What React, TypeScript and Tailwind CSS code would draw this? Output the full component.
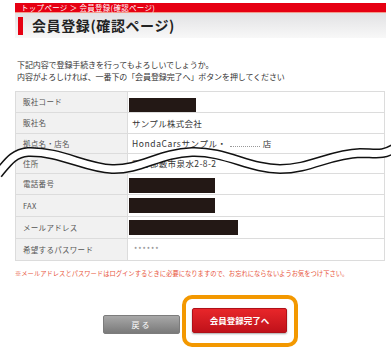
import React from "react";

const font = { fontFamily: '"Noto Sans CJK JP", "Noto Sans", sans-serif' };

function Row({
  label,
  h,
  children,
  last,
}: {
  label: string;
  h: string;
  children?: React.ReactNode;
  last?: boolean;
}) {
  return (
    <div className={`flex ${h} ${last ? "" : "border-b border-[#dcdcdc]"}`}>
      <div className="w-[112px] shrink-0 bg-[#f1f1f1] border-r border-[#dcdcdc] flex items-center pl-[7px] text-[7.5px] text-[#555] tracking-[0.3px]">
        {label}
      </div>
      <div className="flex-1 flex items-center pl-[1px] text-[8.5px] text-[#333]">{children}</div>
    </div>
  );
}

function Black({ w }: { w: string }) {
  return <div className={`${w} h-[14px] bg-[#231815]`} />;
}

export default function App() {
  return (
    <div className="relative w-[391px] h-[351px] bg-white overflow-hidden" style={font}>
      <div className="pl-[15px] pt-[3px]">
        <div className="w-[371px] h-[10px] bg-[#e60012] border-b border-[#f29a8a] text-white text-[7.5px] leading-[10px] pl-[6px] tracking-[0.3px]">
          トップページ ＞ 会員登録(確認ページ)
        </div>
        <div className="w-[371px] h-[25px] bg-gradient-to-b from-[#e2e2e4] to-[#f8f8f8] flex items-center">
          <div className="ml-[3px] w-[5px] h-[18px] bg-[#e60012]" />
          <div className="ml-[9px] text-[14px] font-bold text-[#222] tracking-[0.6px]">
            会員登録(確認ページ)
          </div>
        </div>

        <div className="mt-[21px] pl-[2px] text-[8px] leading-[12px] text-[#333] tracking-[-0.1px]">
          <div>下記内容で登録手続きを行ってもよろしいでしょうか。</div>
          <div>内容がよろしければ、一番下の「会員登録完了へ」ボタンを押してください</div>
        </div>

        <div className="mt-[8px] w-[370px] border border-[#dcdcdc]">
          <Row label="販社コード" h="h-[21px]">
            <div className="mt-[6px]">
              <Black w="w-[67px]" />
            </div>
          </Row>
          <Row label="販社名" h="h-[21px]">
            <span className="pl-[3px] tracking-[0.3px]">サンプル株式会社</span>
          </Row>
          <Row label="拠点名・店名" h="h-[20px]">
            <span className="pl-[3px] tracking-[0.6px]">
              HondaCarsサンプル・
              <span className="inline-block w-[30px] border-b border-dotted border-[#999] mx-[3px]" />
              店
            </span>
          </Row>
          <Row label="住所" h="h-[20px]">
            <span className="pl-[3px] tracking-[0.4px]">田方郡籔市泉水2-8-2</span>
          </Row>
          <Row label="電話番号" h="h-[21px]">
            <div className="mt-[2px]">
              <div className="w-[86px] h-[15px] bg-[#231815]" />
            </div>
          </Row>
          <Row label="FAX" h="h-[22px]">
            <div className="w-[86px] h-[15px] bg-[#231815]" />
          </Row>
          <Row label="メールアドレス" h="h-[22px]">
            <div className="w-[109px] h-[15px] bg-[#231815]" />
          </Row>
          <Row label="希望するパスワード" h="h-[21px]" last>
            <span className="pl-[5px] text-[#777] text-[7px] tracking-[1px]">******</span>
          </Row>
        </div>

        <div className="mt-[9px] text-[6.3px] leading-[8px] text-[#e8553c] whitespace-nowrap">
          ※メールアドレスとパスワードはログインするときに必要になりますので、お忘れにならないようお気をつけ下さい。
        </div>
      </div>

      <div className="flex items-start pl-[103px] mt-[17px]">
        <div className="mt-[20px] w-[77px] h-[19px] rounded-[2px] border border-[#7c7c7c] bg-gradient-to-b from-[#a8a8a8] to-[#7a7a7a] flex items-center justify-center text-white text-[8px] tracking-[2px]">
          戻る
        </div>
        <div className="ml-[2px] rounded-[10px] border-[4px] border-[#f39800] pl-[6px] pt-[9px] pr-[7px] pb-[10px]">
          <div className="w-[95px] h-[25px] rounded-[2px] border border-[#b01018] bg-gradient-to-b from-[#e8262a] to-[#c0111a] flex items-center justify-center text-white text-[8.5px] font-bold shadow-[0_1px_2px_rgba(0,0,0,0.35)]">
            会員登録完了へ
          </div>
        </div>
      </div>

      <svg
        className="absolute left-0 top-0 pointer-events-none"
        width="391"
        height="351"
        viewBox="0 0 391 351"
      >
        <path
          d="M -2,174 C 8,162 14,153 28,152 C 60,151 85,168 112,169 C 140,170 160,153 192,152 C 225,151 250,169 280,169 C 310,169 330,154 360,153 C 375,153 383,156 395,148"
          fill="none"
          stroke="#111"
          strokeWidth="10"
        />
        <path
          d="M -2,174 C 8,162 14,153 28,152 C 60,151 85,168 112,169 C 140,170 160,153 192,152 C 225,151 250,169 280,169 C 310,169 330,154 360,153 C 375,153 383,156 395,148"
          fill="none"
          stroke="#fff"
          strokeWidth="7"
        />
      </svg>
    </div>
  );
}
